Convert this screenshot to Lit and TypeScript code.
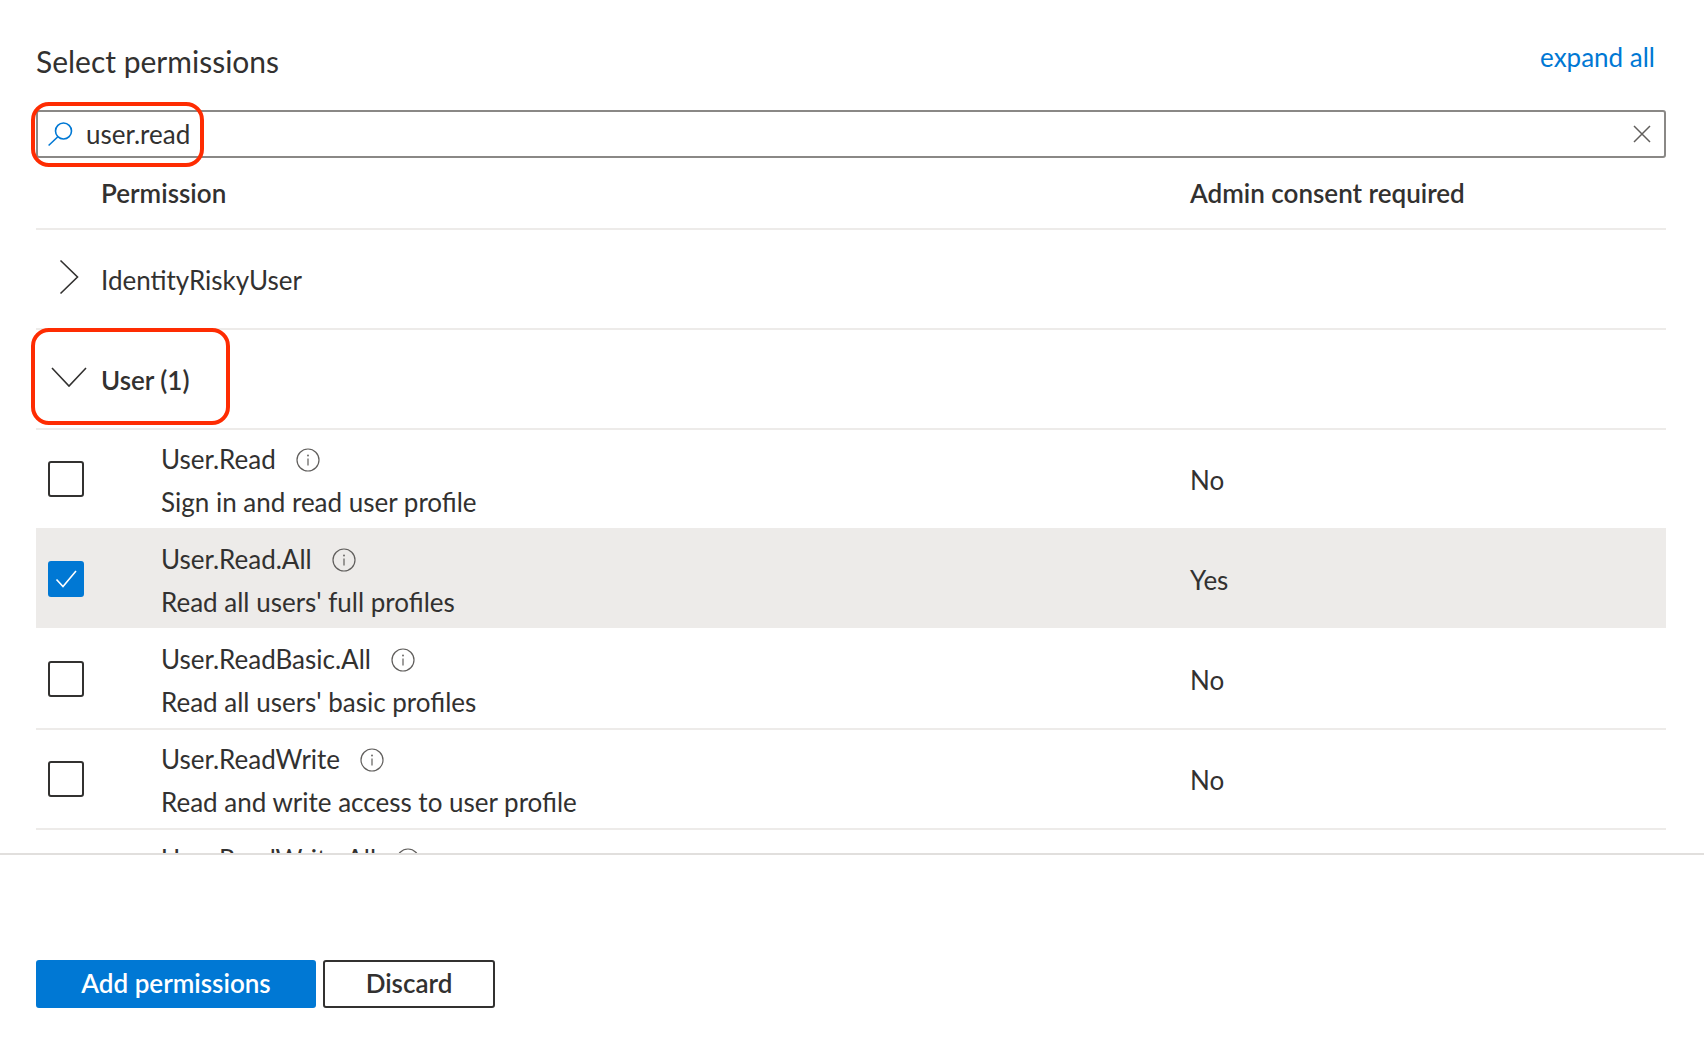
import { LitElement, html, css, svg } from 'lit';
import { customElement } from 'lit/decorators.js';
import { classMap } from 'lit/directives/class-map.js';

interface Perm {
  name: string;
  desc: string;
  admin: string;
  checked?: boolean;
}

const perms: Perm[] = [
  { name: 'User.Read', desc: 'Sign in and read user profile', admin: 'No' },
  { name: 'User.Read.All', desc: "Read all users' full profiles", admin: 'Yes', checked: true },
  { name: 'User.ReadBasic.All', desc: "Read all users' basic profiles", admin: 'No' },
  { name: 'User.ReadWrite', desc: 'Read and write access to user profile', admin: 'No' },
  { name: 'User.ReadWrite.All', desc: "Read and write all users' full profiles", admin: 'Yes' },
];

const infoIcon = svg`<svg class="info" width="24" height="24" viewBox="0 0 24 24" fill="none">
  <circle cx="12" cy="12" r="11" stroke="#605e5c" stroke-width="1.2"/>
  <path d="M12 10.5v7" stroke="#605e5c" stroke-width="1.2"/>
  <circle cx="12" cy="7.5" r="0.9" fill="#605e5c"/>
</svg>`;

@customElement('app-root')
export class AppRoot extends LitElement {
  static styles = css`
    :host {
      display: block;
      position: relative;
      width: 1704px;
      height: 1048px;
      overflow: hidden;
      background: #fff;
      color: #323130;
      font-family: Lato, 'Open Sans', sans-serif;
      font-size: 26px;
    }

    .panel {
      height: 853px;
      padding: 0 38px 0 36px;
      overflow: hidden;
      box-sizing: border-box;
    }

    .top {
      display: flex;
      justify-content: space-between;
      height: 110px;
      padding: 41px 11px 0 0;
      box-sizing: border-box;
    }

    h1 {
      margin: 0;
      font-size: 30px;
      font-weight: 400;
      line-height: 40px;
    }

    .expand {
      margin-top: -4px;
      color: #0078d4;
      line-height: 40px;
    }

    .search {
      display: flex;
      align-items: center;
      gap: 12px;
      height: 48px;
      padding: 0 13px 0 10px;
      border: 2px solid #8a8886;
      border-radius: 3px;
      box-sizing: border-box;
    }

    .search input {
      flex: 1;
      min-width: 0;
      padding: 0;
      border: 0;
      outline: 0;
      background: none;
      color: inherit;
      font: inherit;
    }

    .thead,
    .group,
    .row {
      display: grid;
      box-sizing: border-box;
      border-bottom: 2px solid #edebe9;
    }

    .thead {
      grid-template-columns: 1154px 1fr;
      height: 72px;
      padding-top: 15px;
      font-weight: 600;
      line-height: 40px;
    }

    .thead .first {
      padding-left: 65px;
    }

    .group {
      grid-template-columns: 65px 1fr;
      align-items: center;
      height: 100px;
    }

    .chev {
      display: flex;
      justify-content: center;
      margin-top: -4px;
    }

    .group .label {
      padding-top: 2px;
    }

    .group.open .label {
      font-weight: 600;
    }

    .row {
      grid-template-columns: 125px 1029px 1fr;
      height: 100px;
    }

    .row.sel {
      background: #edebe9;
      background-clip: padding-box;
      border-bottom-color: #fff;
    }

    .box {
      align-self: center;
      justify-self: start;
      display: flex;
      align-items: center;
      justify-content: center;
      width: 36px;
      height: 36px;
      margin-left: 12px;
      border: 2px solid #323130;
      border-radius: 3px;
      box-sizing: border-box;
    }

    .box.on {
      background: #0078d4;
      border-color: #0078d4;
    }

    .perm {
      padding-top: 8px;
      line-height: 43px;
    }

    .name {
      display: flex;
      align-items: center;
      gap: 20px;
    }

    .admin {
      align-self: center;
      padding-top: 2px;
    }

    .foot {
      display: flex;
      gap: 7px;
      padding: 105px 0 0 36px;
      border-top: 2px solid #e1dfdd;
    }

    button {
      height: 48px;
      padding: 0 0 2px;
      border: 2px solid #323130;
      border-radius: 3px;
      background: #fff;
      color: #323130;
      font: inherit;
      font-weight: 600;
      box-sizing: border-box;
    }

    button.primary {
      width: 280px;
      background: #0078d4;
      border-color: #0078d4;
      color: #fff;
    }

    button.plain {
      width: 172px;
    }

    .mark {
      position: absolute;
      border: 4.5px solid #fe2c02;
      border-radius: 18px;
      box-sizing: border-box;
    }

    .mark.a {
      left: 31px;
      top: 102px;
      width: 173px;
      height: 65px;
    }

    .mark.b {
      left: 31px;
      top: 328px;
      width: 199px;
      height: 97px;
    }
  `;

  renderRow(p: Perm) {
    return html`
      <div class=${classMap({ row: true, sel: !!p.checked })}>
        <span class=${classMap({ box: true, on: !!p.checked })}>
          ${p.checked
            ? html`<svg width="24" height="24" viewBox="0 0 24 24" fill="none">
                <path d="M2.5 12.5l6.5 7L22 4" stroke="#fff" stroke-width="1.6"/>
              </svg>`
            : ''}
        </span>
        <div class="perm">
          <div class="name">${p.name} ${infoIcon}</div>
          <div>${p.desc}</div>
        </div>
        <div class="admin">${p.admin}</div>
      </div>
    `;
  }

  render() {
    return html`
      <div class="panel">
        <div class="top">
          <h1>Select permissions</h1>
          <a class="expand">expand all</a>
        </div>
        <div class="search">
          <svg width="26" height="26" viewBox="0 0 26 26" fill="none" stroke="#0078d4" stroke-width="1.6">
            <circle cx="15.5" cy="10" r="8"/>
            <path d="M9.6 16L.6 24.5"/>
          </svg>
          <input .value=${'user.read'} />
          <svg width="18" height="18" viewBox="0 0 18 18" fill="none" stroke="#605e5c" stroke-width="1.5">
            <path d="M1 1l16 16M17 1L1 17"/>
          </svg>
        </div>
        <div class="thead">
          <div class="first">Permission</div>
          <div>Admin consent required</div>
        </div>
        <div class="group">
          <span class="chev">
            <svg width="40" height="40" viewBox="0 0 40 40" fill="none" stroke="#323130" stroke-width="1.6">
              <path d="M11.5 3.5L28.5 20 11.5 36.5"/>
            </svg>
          </span>
          <span class="label">IdentityRiskyUser</span>
        </div>
        <div class="group open">
          <span class="chev">
            <svg width="40" height="40" viewBox="0 0 40 40" fill="none" stroke="#323130" stroke-width="1.6">
              <path d="M3 11l17 18 17-18"/>
            </svg>
          </span>
          <span class="label">User (1)</span>
        </div>
        ${perms.map((p) => this.renderRow(p))}
      </div>
      <div class="foot">
        <button class="primary">Add permissions</button>
        <button class="plain">Discard</button>
      </div>
      <div class="mark a"></div>
      <div class="mark b"></div>
    `;
  }
}
